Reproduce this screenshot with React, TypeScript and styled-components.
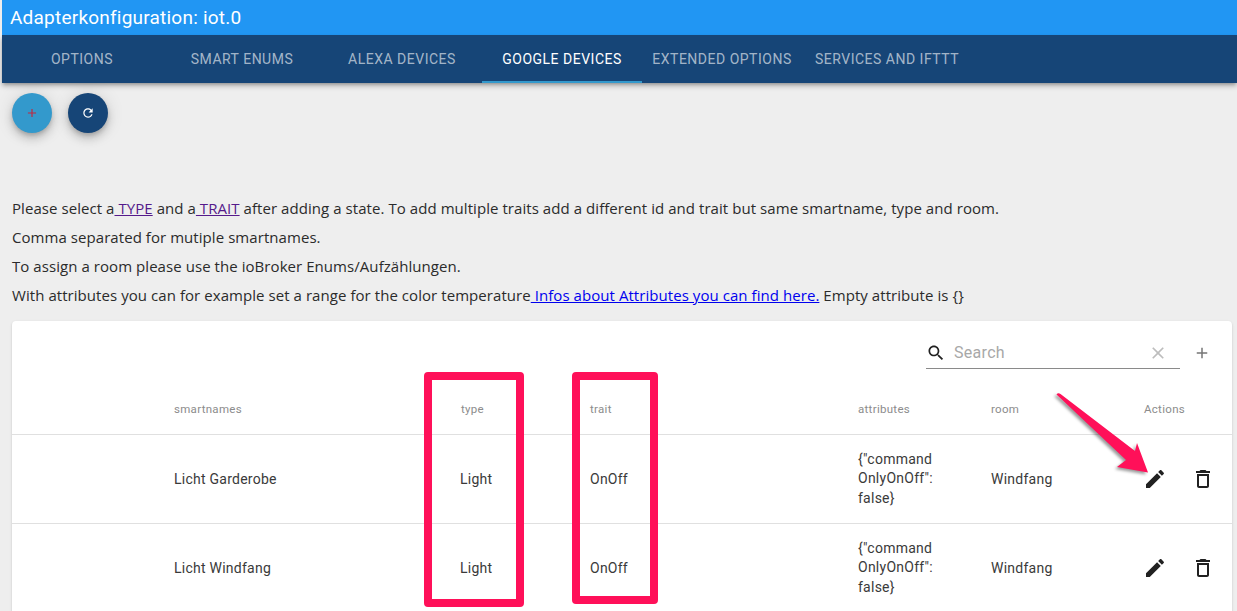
import React from "react";
import styled, { createGlobalStyle } from "styled-components";

const Global = createGlobalStyle`
  html, body { margin: 0; padding: 0; background: #eeeeee; overflow: hidden; height: 611px; }
  * { box-sizing: border-box; }
`;

const Page = styled.div`
  position: relative;
  width: 1237px;
  height: 611px;
  overflow: hidden;
  padding-left: 2px;
  font-family: Roboto, sans-serif;
`;
const TitleBar = styled.header`
  height: 35px;
  background: #2196f3;
  color: #fff;
  font-size: 19px;
  line-height: 35px;
  padding-left: 8px;
  letter-spacing: 0.22px;
`;
const TabBar = styled.nav`
  height: 48px;
  background: #164577;
  display: flex;
  box-shadow: 0 2px 4px -1px rgba(0,0,0,.35), 0 4px 5px rgba(0,0,0,.14);
  position: relative;
`;
const Tab = styled.div<{ $active?: boolean; $w: number }>`
  width: ${p => p.$w}px;
  height: 48px;
  padding-top: 2px;
  display: flex;
  align-items: center;
  justify-content: center;
  font-size: 14px;
  font-weight: 400;
  letter-spacing: 0.5px;
  white-space: nowrap;
  color: ${p => (p.$active ? "#fff" : "rgba(255,255,255,.62)")};
  border-bottom: 2px solid ${p => (p.$active ? "#3399cc" : "transparent")};
`;
const Content = styled.main`
  padding: 10px 3px 0 10px;
`;
const FabRow = styled.div`
  display: flex;
  gap: 16px;
  height: 40px;
`;
const Fab = styled.button<{ $bg: string }>`
  width: 40px;
  height: 40px;
  border: 0;
  padding: 0;
  border-radius: 50%;
  background: ${p => p.$bg};
  display: flex;
  align-items: center;
  justify-content: center;
  box-shadow: 0 3px 5px -1px rgba(0,0,0,.2), 0 6px 10px rgba(0,0,0,.14), 0 1px 18px rgba(0,0,0,.12);
`;
const Intro = styled.div`
  margin-top: 61px;
  font-family: "Open Sans", sans-serif;
  font-size: 15px;
  line-height: 29px;
  height: 116px;
  color: #2b2b2b;
  letter-spacing: 0.06px;
  white-space: nowrap;
`;
const IntroLine = styled.div``;
const TextLink = styled.a<{ $visited?: boolean }>`
  color: ${p => (p.$visited ? "#551a8b" : "#0000ee")};
  text-decoration: underline;
`;
const Card = styled.section`
  margin-top: 11px;
  width: 1220px;
  height: 320px;
  background: #fff;
  border-radius: 4px;
  box-shadow: 0 2px 1px -1px rgba(0,0,0,.2), 0 1px 1px rgba(0,0,0,.14), 0 1px 3px rgba(0,0,0,.12);
`;
const Toolbar = styled.div`
  height: 64px;
  display: flex;
  align-items: flex-start;
  padding: 16px 0 0 914px;
`;
const SearchBox = styled.div`
  width: 254px;
  height: 32px;
  border-bottom: 1px solid #8a8a8a;
  display: flex;
  align-items: center;
`;
const SearchLabel = styled.span`
  flex: 1;
  margin-left: 8px;
  color: #a8a8a8;
  font-size: 16px;
  letter-spacing: 0.3px;
`;
const ClearSlot = styled.div`
  margin-right: 12px;
  display: flex;
`;
const AddButton = styled.div`
  margin: 7px 0 0 13px;
  display: flex;
`;
const Row = styled.div<{ $h: number; $head?: boolean }>`
  display: grid;
  grid-template-columns: 162px 286px 130px 268px 133px 153px 1fr;
  height: ${p => p.$h}px;
  align-items: center;
  border-bottom: 1px solid #e0e0e0;
  font-size: 14px;
  color: ${p => (p.$head ? "#8c8c8c" : "#3a3a3a")};
  letter-spacing: 0.25px;
`;
const HeadCell = styled.div<{ $indent?: number }>`
  font-size: 11.5px;
  letter-spacing: 0.3px;
  padding-left: ${p => p.$indent ?? 0}px;
  padding-bottom: 2px;
`;
const Cell = styled.div``;
const AttrCell = styled.div`
  line-height: 19.5px;
  width: 90px;
`;
const Actions = styled.div`
  display: flex;
  gap: 24px;
  margin-left: -1px;
`;
const Icon = styled.svg<{ $c: string }>`
  fill: ${p => p.$c};
  display: block;
  flex: none;
`;
const Frame = styled.div<{ $x: number; $y: number; $w: number; $h: number }>`
  position: absolute;
  left: ${p => p.$x}px;
  top: ${p => p.$y}px;
  width: ${p => p.$w}px;
  height: ${p => p.$h}px;
  border: 8px solid #ff1059;
  border-radius: 4px;
`;
const ArrowLayer = styled.svg`
  position: absolute;
  left: 1040px;
  top: 380px;
  width: 130px;
  height: 110px;
  overflow: visible;
  filter: drop-shadow(-2px 2px 1.5px rgba(0,0,0,.4));
`;

const I = ({ d, s = 24, c = "#212121" }: { d: string; s?: number; c?: string }) => (
  <Icon $c={c} width={s} height={s} viewBox="0 0 24 24"><path d={d} /></Icon>
);

const ADD = "M19 13h-6v6h-2v-6H5v-2h6V5h2v6h6v2z";
const REFRESH = "M17.65 6.35C16.2 4.9 14.21 4 12 4c-4.42 0-7.99 3.58-7.99 8s3.57 8 7.99 8c3.73 0 6.84-2.55 7.73-6h-2.08c-.82 2.33-3.04 4-5.65 4-3.31 0-6-2.69-6-6s2.69-6 6-6c1.66 0 3.14.69 4.22 1.78L13 11h7V4l-2.35 2.35z";
const SEARCH = "M15.5 14h-.79l-.28-.27C15.41 12.59 16 11.11 16 9.5 16 5.91 13.09 3 9.5 3S3 5.91 3 9.5 5.91 16 9.5 16c1.61 0 3.09-.59 4.23-1.57l.27.28v.79l5 4.99L20.49 19l-4.99-5zm-6 0C7.01 14 5 11.99 5 9.5S7.01 5 9.5 5 14 7.01 14 9.5 11.99 14 9.5 14z";
const CLEAR = "M19 6.41L17.59 5 12 10.59 6.41 5 5 6.41 10.59 12 5 17.59 6.41 19 12 13.41 17.59 19 19 17.59 13.41 12z";
const EDIT = "M3 17.25V21h3.75L17.81 9.94l-3.75-3.75L3 17.25zM20.71 7.04c.39-.39.39-1.02 0-1.41l-2.34-2.34c-.39-.39-1.02-.39-1.41 0l-1.83 1.83 3.75 3.75 1.83-1.83z";
const TRASH = "M6 19c0 1.1.9 2 2 2h8c1.1 0 2-.9 2-2V7H6v12zM8 9h8v10H8V9zm7.5-5l-1-1h-5l-1 1H5v2h14V4z";

const tabs = [
  { t: "OPTIONS", w: 160 },
  { t: "SMART ENUMS", w: 160 },
  { t: "ALEXA DEVICES", w: 160 },
  { t: "GOOGLE DEVICES", w: 160, a: true },
  { t: "EXTENDED OPTIONS", w: 160 },
  { t: "SERVICES AND IFTTT", w: 170 },
];
const rows = [
  { name: "Licht Garderobe" },
  { name: "Licht Windfang" },
];

export default function App() {
  return (
    <Page>
      <Global />
      <TitleBar>Adapterkonfiguration: iot.0</TitleBar>
      <TabBar>
        {tabs.map(t => <Tab key={t.t} $w={t.w} $active={t.a}>{t.t}</Tab>)}
      </TabBar>
      <Content>
        <FabRow>
          <Fab $bg="#3399cc"><I d={ADD} s={14} c="#c0283f" /></Fab>
          <Fab $bg="#164577"><I d={REFRESH} s={14} c="#fff" /></Fab>
        </FabRow>
        <Intro>
          <IntroLine>Please select a<TextLink $visited href="#"> TYPE</TextLink> and a<TextLink $visited href="#"> TRAIT</TextLink> after adding a state. To add multiple traits add a different id and trait but same smartname, type and room.</IntroLine>
          <IntroLine>Comma separated for mutiple smartnames.</IntroLine>
          <IntroLine>To assign a room please use the ioBroker Enums/Aufzählungen.</IntroLine>
          <IntroLine>With attributes you can for example set a range for the color temperature<TextLink href="#"> Infos about Attributes you can find here.</TextLink> Empty attribute is {"{}"}</IntroLine>
        </Intro>
        <Card>
          <Toolbar>
            <SearchBox>
              <I d={SEARCH} s={20} c="#212121" />
              <SearchLabel>Search</SearchLabel>
              <ClearSlot><I d={CLEAR} s={20} c="#bdbdbd" /></ClearSlot>
            </SearchBox>
            <AddButton><I d={ADD} s={18} c="#757575" /></AddButton>
          </Toolbar>
          <Row $head $h={50}>
            <HeadCell />
            <HeadCell>smartnames</HeadCell>
            <HeadCell $indent={1}>type</HeadCell>
            <HeadCell>trait</HeadCell>
            <HeadCell>attributes</HeadCell>
            <HeadCell>room</HeadCell>
            <HeadCell>Actions</HeadCell>
          </Row>
          {rows.map(r => (
            <Row key={r.name} $h={89}>
              <Cell />
              <Cell>{r.name}</Cell>
              <Cell>Light</Cell>
              <Cell>OnOff</Cell>
              <AttrCell>{'{"command OnlyOnOff":'}<br />{"false}"}</AttrCell>
              <Cell>Windfang</Cell>
              <Actions>
                <I d={EDIT} />
                <I d={TRASH} />
              </Actions>
            </Row>
          ))}
        </Card>
      </Content>
      <Frame $x={424} $y={372} $w={100} $h={235} />
      <Frame $x={572} $y={372} $w={86} $h={232} />
      <ArrowLayer viewBox="0 0 130 110">
        <path d="M16.5 14.5 Q18 12.5 20.5 14 L95 71 L97 63 L108 92.5 L77 87 L86 80 Z" fill="#ff1059" />
      </ArrowLayer>
    </Page>
  );
}
